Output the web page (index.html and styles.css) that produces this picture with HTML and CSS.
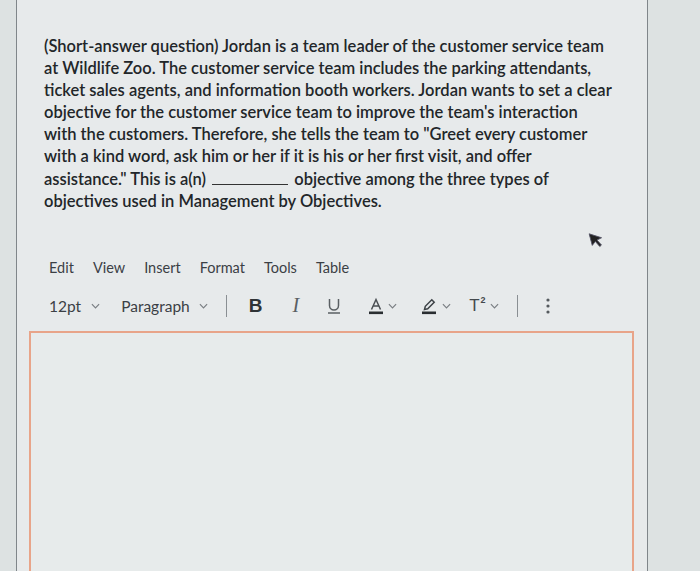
FILE: index.html
```html
<!DOCTYPE html>
<html>
<head>
<meta charset="utf-8">
<link rel="stylesheet" href="styles.css">
</head>
<body>
<div class="panel">
  <p class="question">(Short-answer question) Jordan is a team leader of the customer service team<br>at Wildlife Zoo. The customer service team includes the parking attendants,<br>ticket sales agents, and information booth workers. Jordan wants to set a clear<br>objective for the customer service team to improve the team's interaction<br>with the customers. Therefore, she tells the team to "Greet every customer<br>with a kind word, ask him or her if it is his or her first visit, and offer<br>assistance." This is a(n) <span class="blank"></span> objective among the three types of<br>objectives used in Management by Objectives.</p>

  <div class="menubar">
    <span>Edit</span><span>View</span><span>Insert</span><span>Format</span><span>Tools</span><span>Table</span>
  </div>

  <div class="toolbar">
    <span class="drop">12pt <svg class="chev" viewBox="0 0 10 6"><path d="M1 1l4 4 4-4"/></svg></span>
    <span class="drop para">Paragraph <svg class="chev" viewBox="0 0 10 6"><path d="M1 1l4 4 4-4"/></svg></span>
    <span class="sep"></span>
    <span class="btn bold">B</span>
    <span class="btn ital">I</span>
    <span class="btn under"><svg width="16" height="18" viewBox="0 0 16 18"><path d="M3.5 2v6.5a4.5 4.5 0 0 0 9 0V2" fill="none" stroke="#5a5f63" stroke-width="1.5"/><path d="M2 16h12" stroke="#5a5f63" stroke-width="1.5"/></svg></span>
    <span class="btn grp color"><svg width="16" height="18" viewBox="0 0 16 18"><path d="M3.5 12.5L8 2.5l4.5 10M5.2 9h5.6" fill="none" stroke="#4a4f53" stroke-width="1.5"/><rect x="1" y="14.5" width="14" height="2.6" fill="#2a2e31"/></svg><svg class="chev" viewBox="0 0 10 6"><path d="M1 1l4 4 4-4"/></svg></span>
    <span class="btn grp pen"><svg width="16" height="18" viewBox="0 0 16 18"><path d="M3.5 12.5l0.8-3.2 6.5-6.5 2.4 2.4-6.5 6.5z" fill="none" stroke="#3f4448" stroke-width="1.5"/><rect x="1" y="14.5" width="14" height="2.6" fill="#2a2e31"/></svg><svg class="chev" viewBox="0 0 10 6"><path d="M1 1l4 4 4-4"/></svg></span>
    <span class="btn grp sup"><span class="tsup">T<span class="two">2</span></span><svg class="chev" viewBox="0 0 10 6"><path d="M1 1l4 4 4-4"/></svg></span>
    <span class="sep sep2"></span>
    <span class="btn more"><svg width="4" height="16" viewBox="0 0 4 16"><circle cx="2" cy="2" r="1.6"/><circle cx="2" cy="8" r="1.6"/><circle cx="2" cy="14" r="1.6"/></svg></span>
  </div>

  <div class="editor"></div>
</div>
<svg class="cursor" width="14" height="18" viewBox="0 0 14 18"><path d="M1 1l11 7-5 1 3 6-2 1-3-6-4 3z" fill="#222" stroke="#556" stroke-width="0.8"/></svg>
</body>
</html>
```
FILE: styles.css
```css
html, body {
  margin: 0;
  padding: 0;
  height: 100%;
  overflow: hidden;
}
body {
  background: #dde2e2;
  font-family: Lato, "Open Sans", sans-serif;
  color: #222;
  position: relative;
}
.panel {
  margin-left: 16px;
  width: 632px;
  height: 571px;
  border-left: 1px solid #80868a;
  border-right: 1px solid #80868a;
  background: #e7eaeb;
  box-sizing: border-box;
  overflow: hidden;
}
.question {
  margin: 0;
  padding: 35px 0 0 27px;
  font-size: 16.5px;
  line-height: 22.1px;
  font-weight: 600;
  color: #222629;
  white-space: nowrap;
}
.blank {
  display: inline-block;
  width: 76px;
  border-bottom: 1px solid #333;
  vertical-align: baseline;
  margin: 0 2px;
}
.menubar {
  margin-top: 46px;
  padding-left: 32px;
  display: flex;
  gap: 19px;
  font-size: 14.5px;
  color: #3b4045;
  height: 20px;
  align-items: center;
}
.toolbar {
  margin-top: 17px;
  padding-left: 32px;
  display: flex;
  align-items: center;
  height: 22px;
  font-size: 15.5px;
  color: #3b4045;
}
.drop {
  display: flex;
  align-items: center;
  gap: 10px;
}
.para { margin-left: 21px; gap: 9px; }
.chev {
  width: 9px;
  height: 6px;
  fill: none;
  stroke: #7a7f83;
  stroke-width: 1.3;
}
.sep {
  width: 1px;
  height: 22px;
  background: #8a8f93;
  margin-left: 18px;
}
.btn {
  display: flex;
  align-items: center;
}
.bold {
  font-family: "Liberation Sans", sans-serif;
  font-weight: 700;
  font-size: 19px;
  color: #2f3336;
  margin-left: 22px;
}
.ital {
  font-family: "Liberation Serif", serif;
  font-style: italic;
  font-size: 20px;
  color: #5a5f63;
  margin-left: 30px;
}
.under { margin-left: 27px; }
.color { margin-left: 26px; gap: 4px; }
.pen { margin-left: 24px; gap: 5px; }
.sup {
  font-family: "Liberation Sans", sans-serif;
  font-size: 17px;
  color: #44494d;
  margin-left: 18px;
  gap: 5px;
}
.tsup {
  position: relative;
  padding-right: 5px;
}
.two {
  position: absolute;
  right: -1px;
  top: -1px;
  font-size: 9px;
  font-weight: 700;
}
.sep2 { margin-left: 18px; }
.more { fill: #555a5e; margin-left: 28px; }
.editor {
  margin: 14px 13px 0 12px;
  height: 300px;
  border: 2px solid #e8a489;
  border-bottom: none;
  background: #e7ebeb;
}
.cursor {
  position: absolute;
  left: 590px;
  top: 231px;
  transform: rotate(-15deg);
}
```
